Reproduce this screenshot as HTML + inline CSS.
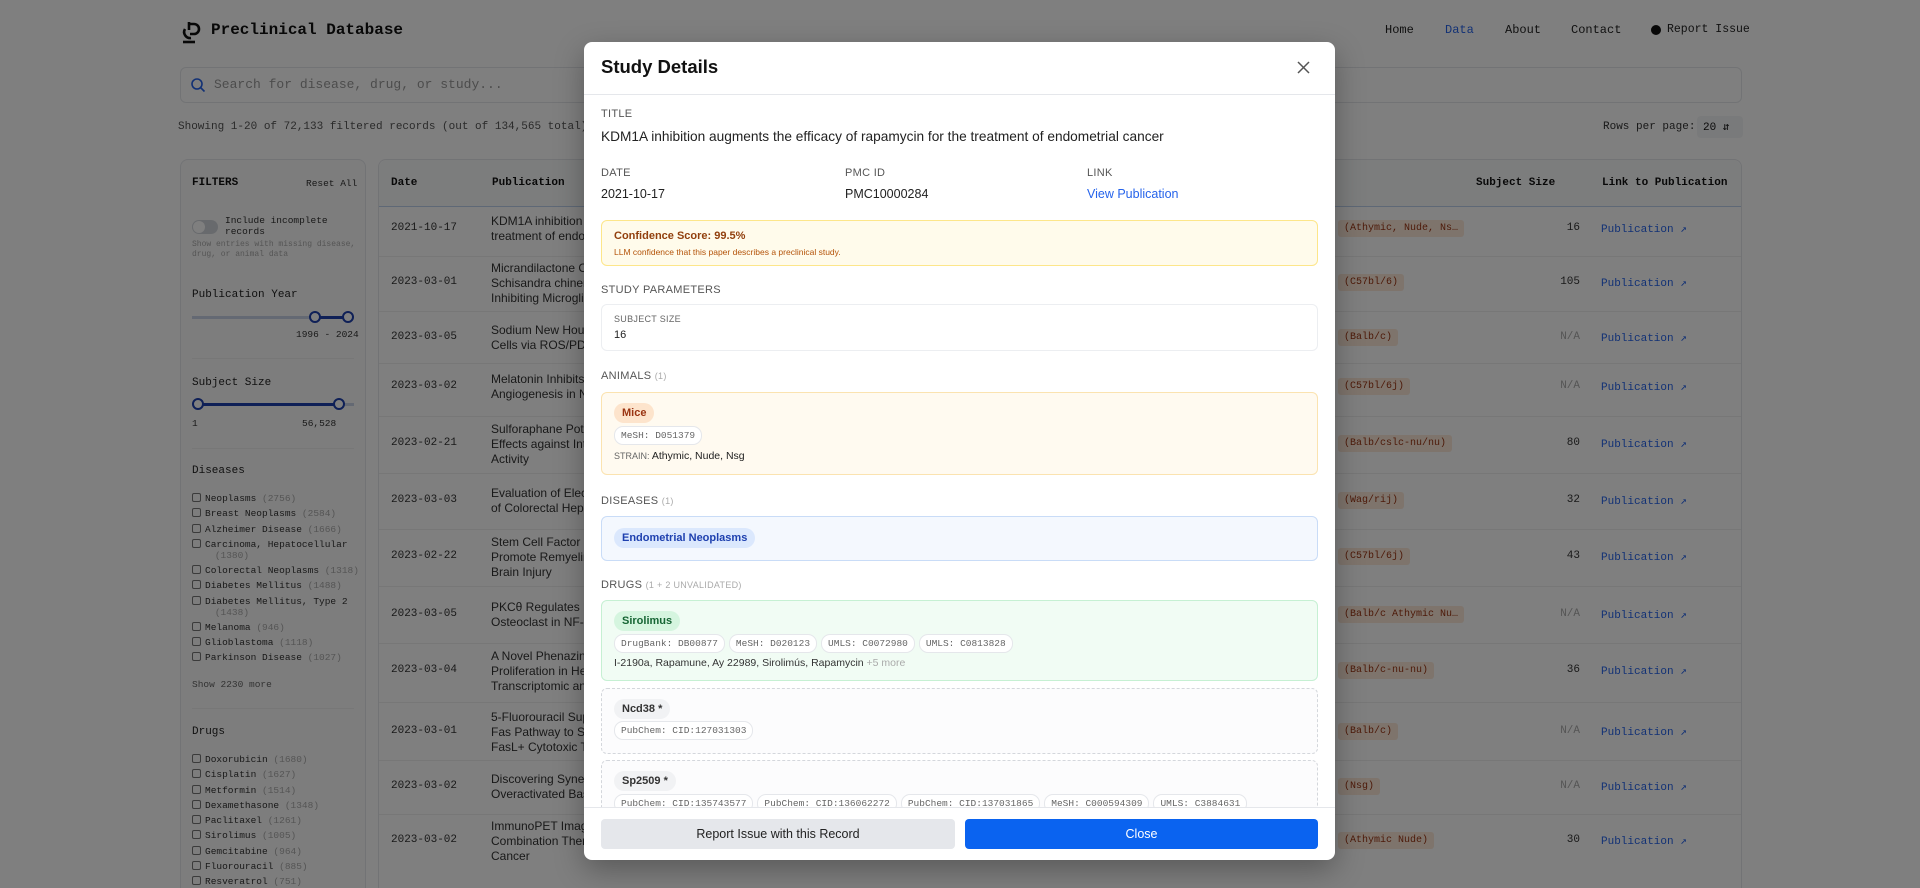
<!DOCTYPE html>
<html style="width:1920px;height:888px;overflow:hidden"><head><meta charset="utf-8"><style>
*{box-sizing:border-box;margin:0;padding:0}
html,body{width:1920px;height:888px;overflow:hidden}
body{background:#fff;position:relative;font-family:"Liberation Sans",sans-serif;color:#111}
.m{font-family:"Liberation Mono",monospace}
.a{position:absolute;white-space:nowrap}
.bg{position:absolute;left:0;top:0;width:1920px;height:888px;overflow:hidden}
.ov{position:absolute;left:0;top:0;width:1920px;height:888px;background:rgba(0,0,0,0.5)}
.nav{font-size:12px;color:#222}
.side{position:absolute;left:180px;top:159px;width:186px;height:729px;border:1px solid #e5e7eb;border-bottom:none;border-radius:8px 8px 0 0;background:#fafafa;overflow:hidden}
.tbl{position:absolute;left:378px;top:159px;width:1364px;height:729px;border:1px solid #e5e7eb;border-bottom:none;border-radius:8px 8px 0 0;background:#fff}
.cb{display:inline-block;width:9px;height:9px;border:1px solid #777;border-radius:2px;vertical-align:-1px;margin-right:4px}
.side .it{font-size:9.5px;color:#333}
.side .it span{color:#aaa}
.tag{background:#fde8d8;color:#9a3412;font-size:10px;padding:3px 6px;border-radius:3px}
.pub{color:#2563eb;font-size:11px}
.modal{position:absolute;left:584px;top:42px;width:751px;height:818px;background:#fff;border-radius:8px;overflow:hidden;box-shadow:0 10px 30px rgba(0,0,0,.3)}
.lab{font-size:11px;color:#555;letter-spacing:.3px}
.lab span{color:#aaa;font-size:9px}
.box{position:absolute;left:17px;width:717px;border-radius:6px;border:1px solid}
.chip{position:absolute;left:12px;height:20px;line-height:20px;padding:0 8px;border-radius:10px;font-size:12px;font-weight:bold}
.id{display:inline-block;height:19px;line-height:17px;padding:0 6px;border:1px solid #e5e7eb;border-radius:9px;background:#fff;font-family:"Liberation Mono",monospace;font-size:9.5px;color:#666;margin-right:4px}
.ids{position:absolute;left:12px}
</style></head><body>
<div class="bg">
  <svg class="a" style="left:180px;top:20px" width="22" height="24" viewBox="0 0 22 24"><path d="M8 4h6a5 5 0 0 1 0 10h-4" fill="none" stroke="#111" stroke-width="2.6"/><path d="M9 2v8M5 9a6 6 0 0 0 6 9" fill="none" stroke="#111" stroke-width="2.6"/><path d="M3 22h12" stroke="#111" stroke-width="2.6"/></svg>
  <div class="a m" style="left:211px;top:21px;font-size:16px;font-weight:bold">Preclinical Database</div>
  <div class="a m nav" style="left:1385px;top:23px">Home</div>
  <div class="a m nav" style="left:1445px;top:23px;color:#2563eb">Data</div>
  <div class="a m nav" style="left:1505px;top:23px">About</div>
  <div class="a m nav" style="left:1571px;top:23px">Contact</div>
  <div class="a" style="left:1651px;top:25px;width:10px;height:10px;border-radius:5px;background:#111"></div>
  <div class="a m nav" style="left:1667px;top:23px;font-size:11.5px">Report Issue</div>
  <div class="a" style="left:180px;top:67px;width:1562px;height:36px;border:1px solid #e5e7eb;border-radius:6px;background:#fff"></div>
  <svg class="a" style="left:190px;top:77px" width="16" height="16" viewBox="0 0 16 16"><circle cx="7" cy="7" r="5" fill="none" stroke="#2563eb" stroke-width="1.6"/><path d="M11 11l3.5 3.5" stroke="#2563eb" stroke-width="1.6"/></svg>
  <div class="a m" style="left:214px;top:77px;font-size:13px;color:#999">Search for disease, drug, or study...</div>
  <div class="a m" style="left:178px;top:121px;font-size:11px;color:#555">Showing 1-20 of 72,133 filtered records (out of 134,565 total)</div>
  <div class="a m" style="left:1603px;top:121px;font-size:11px;color:#333">Rows per page:</div>
  <div class="a m" style="left:1697px;top:116px;width:46px;height:22px;border-radius:4px;background:#f3f4f6;font-size:11px;padding:4px 6px">20 &#8693;</div>
  <div class="side">
    <div class="a m" style="left:11px;top:17px;font-size:11px;font-weight:bold">FILTERS</div>
    <div class="a m" style="left:125px;top:18px;font-size:9.5px;color:#333">Reset All</div>
    <div class="a" style="left:11px;top:60px;width:26px;height:14px;border-radius:7px;background:#d1d5db"></div>
    <div class="a" style="left:12px;top:61px;width:12px;height:12px;border-radius:6px;background:#fff"></div>
    <div class="a m" style="left:44px;top:55px;font-size:9.5px;line-height:11px;color:#333;white-space:normal;width:130px">Include incomplete records</div>
    <div class="a m" style="left:11px;top:80px;font-size:8px;line-height:10px;color:#aaa;white-space:normal;width:170px">Show entries with missing disease, drug, or animal data</div>
    <div class="a m" style="left:11px;top:129px;font-size:11px;color:#222">Publication Year</div>
    <div class="a" style="left:11px;top:156px;width:162px;height:3px;background:#c8d3e6"></div>
    <div class="a" style="left:134px;top:156px;width:34px;height:3px;background:#1e40af"></div>
    <div class="a" style="left:128px;top:151px;width:12px;height:12px;border-radius:6px;border:2px solid #1e40af;background:#fff"></div>
    <div class="a" style="left:161px;top:151px;width:12px;height:12px;border-radius:6px;border:2px solid #1e40af;background:#fff"></div>
    <div class="a m" style="left:115px;top:169px;font-size:9.5px;color:#333">1996 - 2024</div>
    <div class="a" style="left:11px;top:198px;width:162px;height:1px;background:#eee"></div>
    <div class="a m" style="left:11px;top:217px;font-size:11px;color:#222">Subject Size</div>
    <div class="a" style="left:11px;top:243px;width:162px;height:3px;background:#c8d3e6"></div>
    <div class="a" style="left:17px;top:243px;width:141px;height:3px;background:#1e40af"></div>
    <div class="a" style="left:11px;top:238px;width:12px;height:12px;border-radius:6px;border:2px solid #1e40af;background:#fff"></div>
    <div class="a" style="left:152px;top:238px;width:12px;height:12px;border-radius:6px;border:2px solid #1e40af;background:#fff"></div>
    <div class="a m" style="left:11px;top:258px;font-size:9.5px;color:#333">1</div>
    <div class="a m" style="left:121px;top:258px;font-size:9.5px;color:#333">56,528</div>
    <div class="a" style="left:11px;top:288px;width:162px;height:1px;background:#eee"></div>
    <div class="a m" style="left:11px;top:305px;font-size:11px;color:#222">Diseases</div>
    <div class="a m it" style="left:11px;top:333px"><i class="cb"></i>Neoplasms <span>(2756)</span></div>
    <div class="a m it" style="left:11px;top:348px"><i class="cb"></i>Breast Neoplasms <span>(2584)</span></div>
    <div class="a m it" style="left:11px;top:364px"><i class="cb"></i>Alzheimer Disease <span>(1666)</span></div>
    <div class="a m it" style="left:11px;top:379px;line-height:11px"><i class="cb"></i>Carcinoma, Hepatocellular<br>&nbsp;&nbsp;&nbsp;&nbsp;<span>(1380)</span></div>
    <div class="a m it" style="left:11px;top:405px"><i class="cb"></i>Colorectal Neoplasms <span>(1318)</span></div>
    <div class="a m it" style="left:11px;top:420px"><i class="cb"></i>Diabetes Mellitus <span>(1488)</span></div>
    <div class="a m it" style="left:11px;top:436px;line-height:11px"><i class="cb"></i>Diabetes Mellitus, Type 2<br>&nbsp;&nbsp;&nbsp;&nbsp;<span>(1438)</span></div>
    <div class="a m it" style="left:11px;top:462px"><i class="cb"></i>Melanoma <span>(946)</span></div>
    <div class="a m it" style="left:11px;top:477px"><i class="cb"></i>Glioblastoma <span>(1118)</span></div>
    <div class="a m it" style="left:11px;top:492px"><i class="cb"></i>Parkinson Disease <span>(1027)</span></div>
    <div class="a m" style="left:11px;top:519px;font-size:9.5px;color:#666">Show 2230 more</div>
    <div class="a" style="left:11px;top:548px;width:162px;height:1px;background:#eee"></div>
    <div class="a m" style="left:11px;top:566px;font-size:11px;color:#222">Drugs</div>
    <div class="a m it" style="left:11px;top:594px"><i class="cb"></i>Doxorubicin <span>(1680)</span></div>
    <div class="a m it" style="left:11px;top:609px"><i class="cb"></i>Cisplatin <span>(1627)</span></div>
    <div class="a m it" style="left:11px;top:625px"><i class="cb"></i>Metformin <span>(1514)</span></div>
    <div class="a m it" style="left:11px;top:640px"><i class="cb"></i>Dexamethasone <span>(1348)</span></div>
    <div class="a m it" style="left:11px;top:655px"><i class="cb"></i>Paclitaxel <span>(1261)</span></div>
    <div class="a m it" style="left:11px;top:670px"><i class="cb"></i>Sirolimus <span>(1005)</span></div>
    <div class="a m it" style="left:11px;top:686px"><i class="cb"></i>Gemcitabine <span>(964)</span></div>
    <div class="a m it" style="left:11px;top:701px"><i class="cb"></i>Fluorouracil <span>(885)</span></div>
    <div class="a m it" style="left:11px;top:716px"><i class="cb"></i>Resveratrol <span>(751)</span></div>
  </div>
  <div class="tbl">
    <div class="a" style="left:0;top:0;width:100%;height:47px;background:#f9fafb;border-bottom:1px solid #bcd0ec;border-radius:8px 8px 0 0"></div>
    <div class="a m" style="left:12px;top:17px;font-size:11px;font-weight:bold">Date</div>
    <div class="a m" style="left:113px;top:17px;font-size:11px;font-weight:bold">Publication</div>
    <div class="a m" style="left:1097px;top:17px;font-size:11px;font-weight:bold">Subject Size</div>
    <div class="a m" style="left:1223px;top:17px;font-size:11px;font-weight:bold">Link to Publication</div>
  </div>
  <div id="rows"></div>
</div>
<script>
var ys=[229,283,338,387,444,501,557,615,671,732,787,841];
var ds=["2021-10-17","2023-03-01","2023-03-05","2023-03-02","2023-02-21","2023-03-03","2023-02-22","2023-03-05","2023-03-04","2023-03-01","2023-03-02","2023-03-02"];
var ps=[["KDM1A inhibition a","treatment of endom"],["Micrandilactone C,","Schisandra chinens","Inhibiting Microglia"],["Sodium New Houttu","Cells via ROS/PDK1"],["Melatonin Inhibits V","Angiogenesis in Ne"],["Sulforaphane Poten","Effects against Intr","Activity"],["Evaluation of Electr","of Colorectal Hepat"],["Stem Cell Factor an","Promote Remyelina","Brain Injury"],["PKCθ Regulates Pit","Osteoclast in NF-κB"],["A Novel Phenazine","Proliferation in Hep","Transcriptomic and"],["5-Fluorouracil Supp","Fas Pathway to Sen","FasL+ Cytotoxic T L"],["Discovering Synerg","Overactivated Basa"],["ImmunoPET Imagin","Combination Thera","Cancer"]];
var tg=["(Athymic, Nude, Ns…","(C57bl/6)","(Balb/c)","(C57bl/6j)","(Balb/cslc-nu/nu)","(Wag/rij)","(C57bl/6j)","(Balb/c Athymic Nu…","(Balb/c-nu-nu)","(Balb/c)","(Nsg)","(Athymic Nude)"];
var ss=["16","105","N/A","N/A","80","32","43","N/A","36","N/A","N/A","30"];
var h="";
for(var i=0;i<12;i++){var y=ys[i];
if(i>0)h+='<div class="a" style="left:379px;top:'+((ys[i-1]+y)/2)+'px;width:1362px;height:1px;background:#eee"></div>';
h+='<div class="a m" style="left:391px;top:'+(y-7)+'px;font-size:11px;color:#333">'+ds[i]+'</div>';
var p=ps[i],t=y-p.length*7.5;
h+='<div class="a" style="left:491px;top:'+t+'px;font-size:12px;line-height:15px;color:#333">'+p.join('<br>')+'</div>';
h+='<div class="a m tag" style="left:1338px;top:'+(y-9)+'px">'+tg[i]+'</div>';
h+='<div class="a m" style="left:1480px;width:100px;text-align:right;top:'+(y-7)+'px;font-size:11px;color:'+(ss[i]=="N/A"?"#aaa":"#333")+'">'+ss[i]+'</div>';
h+='<div class="a m pub" style="left:1601px;top:'+(y-7)+'px">Publication &#8599;</div>';}
document.getElementById("rows").innerHTML=h;
</script>
<div class="ov"></div>
<div class="modal">
  <div class="a" style="left:17px;top:14px;font-size:18.5px;font-weight:bold;color:#111">Study Details</div>
  <svg class="a" style="left:713px;top:19px" width="13" height="13" viewBox="0 0 13 13"><path d="M1 1l11 11M12 1L1 12" stroke="#555" stroke-width="1.5"/></svg>
  <div class="a" style="left:0;top:52px;width:751px;height:1px;background:#e5e7eb"></div>
  <div style="position:absolute;left:0;top:53px;width:751px;height:712px;overflow:hidden">
    <div class="a lab" style="left:17px;top:13px">TITLE</div>
    <div class="a" style="left:17px;top:34px;font-size:13.7px;color:#222">KDM1A inhibition augments the efficacy of rapamycin for the treatment of endometrial cancer</div>
    <div class="a lab" style="left:17px;top:72px">DATE</div>
    <div class="a lab" style="left:261px;top:72px">PMC ID</div>
    <div class="a lab" style="left:503px;top:72px">LINK</div>
    <div class="a" style="left:17px;top:92px;font-size:12.5px;color:#222">2021-10-17</div>
    <div class="a" style="left:261px;top:92px;font-size:12.5px;color:#222">PMC10000284</div>
    <div class="a" style="left:503px;top:92px;font-size:12.5px;color:#2563eb">View Publication</div>
    <div class="box" style="top:125px;height:46px;background:#fffbeb;border-color:#fde68a">
      <div class="a" style="left:12px;top:9px;font-size:11px;font-weight:bold;color:#92400e">Confidence Score: 99.5%</div>
      <div class="a" style="left:12px;top:26px;font-size:8.5px;color:#b45309">LLM confidence that this paper describes a preclinical study.</div>
    </div>
    <div class="a lab" style="left:17px;top:189px">STUDY PARAMETERS</div>
    <div class="box" style="top:209px;height:47px;background:#fff;border-color:#eceef1">
      <div class="a" style="left:12px;top:9px;font-size:9px;color:#666;letter-spacing:.3px">SUBJECT SIZE</div>
      <div class="a" style="left:12px;top:24px;font-size:11px;color:#222">16</div>
    </div>
    <div class="a lab" style="left:17px;top:275px">ANIMALS <span>(1)</span></div>
    <div class="box" style="top:297px;height:83px;background:#fffaf0;border-color:#fbe3b0">
      <div class="chip" style="top:10px;background:#fde4cc;color:#9a3412;font-size:11px">Mice</div>
      <div class="ids" style="top:32px"><span class="id">MeSH: D051379</span></div>
      <div class="a" style="left:12px;top:57px;font-size:10.5px;color:#222"><span style="font-size:9px;color:#666">STRAIN:</span> Athymic, Nude, Nsg</div>
    </div>
    <div class="a lab" style="left:17px;top:400px">DISEASES <span>(1)</span></div>
    <div class="box" style="top:421px;height:45px;background:#f4f8fe;border-color:#c9dcf7">
      <div class="chip" style="top:11px;background:#dbe8fd;color:#1e40af;font-size:11px">Endometrial Neoplasms</div>
    </div>
    <div class="a lab" style="left:17px;top:484px">DRUGS <span>(1 + 2 UNVALIDATED)</span></div>
    <div class="box" style="top:505px;height:81px;background:#f1fcf4;border-color:#c6f0d3">
      <div class="chip" style="top:10px;background:#d5f5df;color:#166534;font-size:11px">Sirolimus</div>
      <div class="ids" style="top:32px"><span class="id">DrugBank: DB00877</span><span class="id">MeSH: D020123</span><span class="id">UMLS: C0072980</span><span class="id">UMLS: C0813828</span></div>
      <div class="a" style="left:12px;top:56px;font-size:10.5px;color:#333">I-2190a, Rapamune, Ay 22989, Sirolimús, Rapamycin <span style="color:#aaa">+5 more</span></div>
    </div>
    <div class="box" style="top:593px;height:66px;background:#fcfcfd;border:1px dashed #d4d7dc">
      <div class="chip" style="top:10px;background:#f1f2f4;color:#333;font-size:11px">Ncd38 *</div>
      <div class="ids" style="top:31px"><span class="id">PubChem: CID:127031303</span></div>
    </div>
    <div class="box" style="top:665px;height:80px;background:#fcfcfd;border:1px dashed #d4d7dc">
      <div class="chip" style="top:10px;background:#f1f2f4;color:#333;font-size:11px">Sp2509 *</div>
      <div class="ids" style="top:32px"><span class="id">PubChem: CID:135743577</span><span class="id">PubChem: CID:136062272</span><span class="id">PubChem: CID:137031865</span><span class="id">MeSH: C000594309</span><span class="id">UMLS: C3884631</span></div>
    </div>
  </div>
  <div class="a" style="left:0;top:765px;width:751px;height:1px;background:#e5e7eb"></div>
  <div class="a" style="left:17px;top:777px;width:354px;height:30px;border-radius:4px;background:#e5e7eb;text-align:center;line-height:30px;font-size:12.5px;color:#222">Report Issue with this Record</div>
  <div class="a" style="left:381px;top:777px;width:353px;height:30px;border-radius:4px;background:#0a63f0;text-align:center;line-height:30px;font-size:12.5px;color:#fff">Close</div>
</div>
</body></html>
